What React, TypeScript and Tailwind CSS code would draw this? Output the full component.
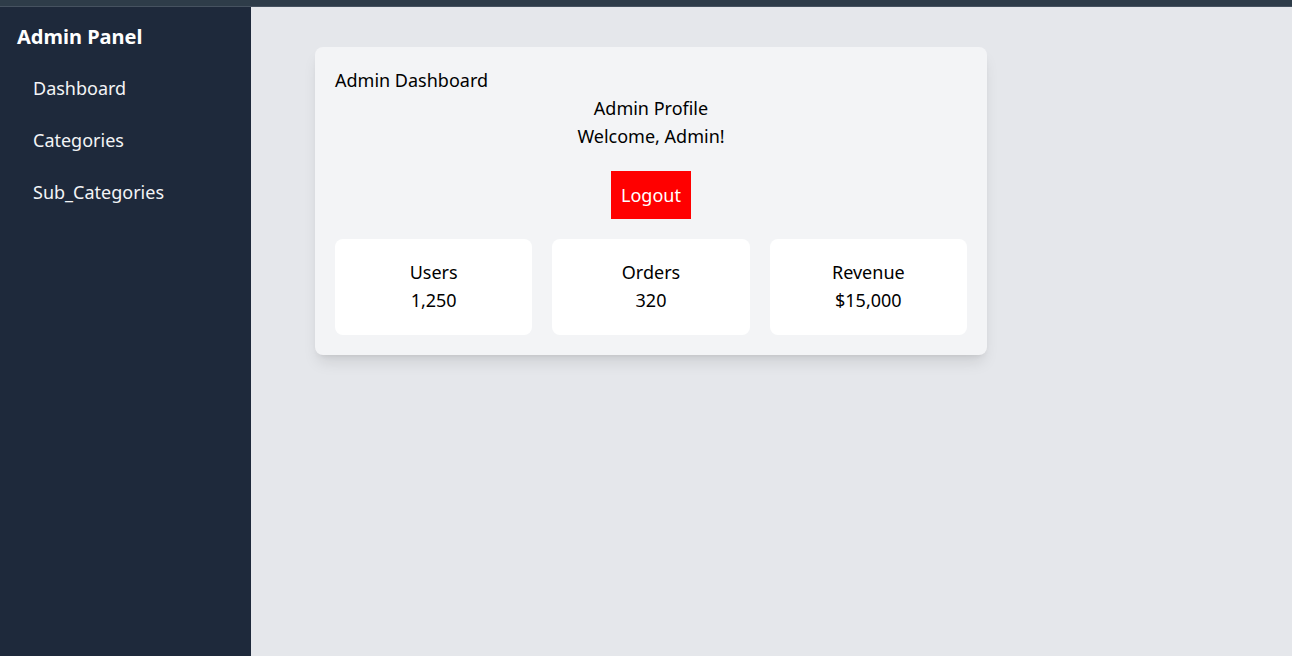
const stats = [
  { label: "Users", value: "1,250" },
  { label: "Orders", value: "320" },
  { label: "Revenue", value: "$15,000" },
];

const links = ["Dashboard", "Categories", "Sub_Categories"];

export default function App() {
  return (
    <div
      className="h-screen flex flex-col overflow-hidden"
      style={{ fontFamily: '"Noto Sans", "Open Sans", sans-serif' }}
    >
      <div className="h-[7px] shrink-0 bg-[#2e3c49] border-b border-[#465260]" />
      <div className="flex flex-1 min-h-0">
        {/* Sidebar */}
        <aside className="w-[251px] shrink-0 bg-[#1e293b] text-white pl-[17px] pr-4 pt-4">
          <h1 className="text-xl font-bold leading-[28px] mb-[23px]">Admin Panel</h1>
          <nav className="flex flex-col gap-6">
            {links.map((l) => (
              <a key={l} className="px-4 text-lg leading-[28px] text-gray-100 cursor-pointer">
                {l}
              </a>
            ))}
          </nav>
        </aside>

        {/* Main */}
        <main className="flex-1 bg-[#e5e7eb] pt-10 pl-16">
          <div className="w-[672px] bg-[#f3f4f6] rounded-lg shadow-lg p-5 text-black">
            <h2 className="text-lg leading-[28px] -mt-px">Admin Dashboard</h2>
            <div className="text-center">
              <p className="text-lg leading-[28px]">Admin Profile</p>
              <p className="text-lg leading-[28px]">Welcome, Admin!</p>
              <button className="mt-[21px] bg-[#ff0000] text-white text-lg leading-[28px] px-2.5 py-2.5">
                Logout
              </button>
            </div>
            <div className="grid grid-cols-3 gap-5 mt-5">
              {stats.map((s) => (
                <div key={s.label} className="bg-white rounded-lg px-5 pt-5 pb-[21px] text-center">
                  <p className="text-lg leading-[28px] -mt-px">{s.label}</p>
                  <p className="text-lg leading-[28px]">{s.value}</p>
                </div>
              ))}
            </div>
          </div>
        </main>
      </div>
    </div>
  );
}
